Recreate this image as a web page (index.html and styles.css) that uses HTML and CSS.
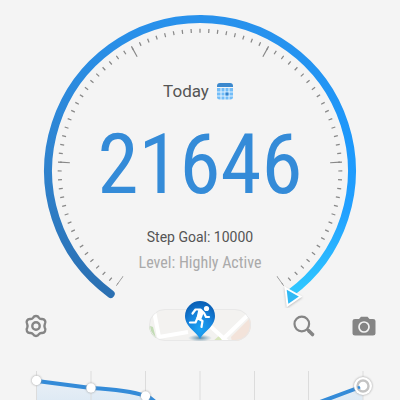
FILE: index.html
```html
<!DOCTYPE html>
<html lang="en">
<head>
<meta charset="utf-8">
<meta name="viewport" content="width=device-width, initial-scale=1">
<title>Steps</title>
<link rel="stylesheet" href="styles.css">
</head>
<body>
<main class="app">
  <section class="gauge">
    <svg class="dial" viewBox="0 0 400 308" aria-hidden="true">
      <defs>
        <linearGradient id="ringLeft" gradientUnits="userSpaceOnUse" x1="0" y1="294" x2="0" y2="18">
          <stop offset="0" stop-color="#2b70b2"/>
          <stop offset=".45" stop-color="#2f82cd"/>
          <stop offset="1" stop-color="#2891ec"/>
        </linearGradient>
        <linearGradient id="ringRight" gradientUnits="userSpaceOnUse" x1="0" y1="18" x2="0" y2="294">
          <stop offset="0" stop-color="#2891ec"/>
          <stop offset=".45" stop-color="#1d98fb"/>
          <stop offset=".7" stop-color="#21a0ff"/>
          <stop offset="1" stop-color="#2fc8ff"/>
        </linearGradient>
      </defs>
      <g fill="none" stroke-width="8">
        <path d="M289.300 293.900A152 152 0 0 0 200 19" stroke="url(#ringRight)"/>
        <path d="M110.700 293.900A152 152 0 0 1 200.500 19" stroke="url(#ringLeft)" stroke-linecap="round"/>
      </g>
      <g fill="none" stroke="#888">
        <path d="M117.500 284.500A140.300 140.300 0 1 1 282.500 284.500" pathLength="8000" stroke-width="4" stroke-dasharray="14 86" stroke-dashoffset="7"/>
        <path d="M120.400 280.500A135.400 135.400 0 1 1 279.600 280.500" pathLength="8000" stroke-width="10" stroke-dasharray="14 1586" stroke-dashoffset="7"/>
      </g>
      <path class="pointer" d="M285.500 288L300.500 296.500L287.500 305.500Z"/>
    </svg>
    <div class="readout">
      <button class="day" type="button">Today
        <svg width="16" height="17" viewBox="0 0 16 17" aria-hidden="true">
          <path d="M0 4V3Q0 0 3 0H13Q16 0 16 3V4Z" fill="#3b88cd"/>
          <path d="M0 5H16V14Q16 16.500 13 16.500H3Q0 16.500 0 14Z" fill="#72bdf8"/>
          <path d="M4 5V17M8 5V17M12 5V17M0 9H16M0 13H16" stroke="#e4f2fd"/>
          <path d="M8.500 9.500H11.500V12.500H8.500Z" fill="#3484cf"/>
        </svg>
      </button>
      <strong class="steps">21646</strong>
      <p class="goal">Step Goal: 10000</p>
      <p class="level">Level: Highly Active</p>
    </div>
  </section>

  <nav class="tools">
    <button class="tool" type="button" aria-label="Settings">
      <svg width="24" height="24" viewBox="0 0 24 24" fill="none" stroke="#858585" stroke-width="2.400">
        <path d="M9 3.800Q10 2 12 2Q14 2 15 3.800Q16 5.300 17.800 5Q20 4.900 21 6.700Q22 8.500 20.800 10.200Q20 12 20.800 13.800Q22 15.500 21 17.300Q20 19.100 17.800 19Q16 18.700 15 20.200Q14 22 12 22Q10 22 9 20.200Q8 18.700 6.200 19Q4 19.100 3 17.300Q2 15.500 3.200 13.800Q4 12 3.200 10.200Q2 8.500 3 6.700Q4 4.900 6.200 5Q8 5.300 9 3.800Z"/>
        <circle cx="12" cy="12" r="3.700"/>
      </svg>
    </button>
    <button type="button" aria-label="Map">
      <svg width="104" height="46" viewBox="0 0 104 46">
        <defs>
          <clipPath id="pill"><rect x="1" y="13" width="102" height="32" rx="16"/></clipPath>
          <radialGradient id="pin" cx=".5" cy=".75" r=".7">
            <stop offset="0" stop-color="#1ca4f4"/><stop offset=".6" stop-color="#1683dc"/><stop offset="1" stop-color="#0b62b8"/>
          </radialGradient>
          <radialGradient id="shade"><stop offset="0" stop-color="#356f91" stop-opacity=".8"/><stop offset="1" stop-color="#5089a8" stop-opacity="0"/></radialGradient>
        </defs>
        <g clip-path="url(#pill)">
          <path d="M0 13H104V46H0Z" fill="#f3f2f0"/>
          <path d="M0 29L5 31L9 46H0Z" fill="#c2dcb4"/>
          <path d="M64 46L72 39L78 46Z" fill="#d8e5bd"/>
          <path d="M83 41L104 20V46H84Z" fill="#f3e3da"/>
          <path d="M6 15L11 41L40 36M62 30L82 48M74 44L102 17" fill="none" stroke="#fff" stroke-width="4"/>
        </g>
        <rect x="1.500" y="13.500" width="101" height="31" rx="15.500" fill="none" stroke="#e8e8e8"/>
        <ellipse cx="52" cy="42" rx="12" ry="3.500" fill="url(#shade)"/>
        <path d="M52 43C49 36 37 31 37 20A15 15 0 0 1 67 20C67 31 55 36 52 43Z" fill="url(#pin)"/>
        <circle cx="58.500" cy="12.500" r="2.600" fill="#fff"/>
        <path d="M44.500 17.500L47.500 13.500H52.500L56 17L58 21H61M52.500 15.500L49.500 22L54.500 25L53.500 31M49.500 22L47.500 26.500H42" fill="none" stroke="#fff" stroke-width="2.200" stroke-linejoin="round" stroke-linecap="round"/>
        <path d="M50.500 13L56 16L53 24L48.500 22Z" fill="#fff"/>
      </svg>
    </button>
    <div class="tools-end">
      <button class="tool" type="button" aria-label="Search">
        <svg width="24" height="24" viewBox="0 0 24 24" fill="none" stroke="#858585">
          <circle cx="9.800" cy="10" r="7.300" stroke-width="2.200"/>
          <path d="M15 15L17 17" stroke-width="2.500"/>
          <path d="M17 17L20.500 20.500" stroke-width="3.600" stroke-linecap="round"/>
        </svg>
      </button>
      <button class="tool" type="button" aria-label="Camera">
        <svg width="24" height="24" viewBox="0 0 24 24">
          <path d="M7 5L9 2.800H15.500L17.500 5H21Q23.500 5 23.500 7V19.500Q23.500 21.500 21 21.500H3Q.5 21.500 .5 19.500V7Q.5 5 3 5Z" fill="#858585"/>
          <circle cx="12" cy="13" r="5" fill="#858585" stroke="#f4f4f4" stroke-width="1.700"/>
        </svg>
      </button>
    </div>
  </nav>

  <section class="chart" aria-label="Step history">
    <svg viewBox="0 0 400 30" aria-hidden="true">
      <defs>
        <linearGradient id="area" x1="0" y1="0" x2="0" y2="1"><stop offset="0" stop-color="#e8eff6"/><stop offset="1" stop-color="#dfeaf4"/></linearGradient>
      </defs>
      <path d="M37 11L91 18Q128 20 146 26L153 30H37ZM325 30L363 16V30Z" fill="url(#area)"/>
      <path d="M36.500 1V30M91 1V30M145.500 1V30M200 1V30M254.500 1V30M308.500 1V30M363 1V30" stroke="#dcdcdc"/>
      <path d="M37 11L91 18Q128 20 146 26Q151 27.500 156 33M320 32L363 16" fill="none" stroke="#348bd8" stroke-width="4"/>
      <g class="points">
        <circle cx="36.500" cy="10.500" r="4.700"/>
        <circle cx="91" cy="18" r="4.700"/>
        <circle cx="145.500" cy="26" r="4.700"/>
        <circle cx="363" cy="16" r="9"/>
      </g>
      <circle cx="363" cy="16" r="5.500" fill="#fff" stroke="#c4c4c4" stroke-width="2.400"/>
      <path d="M358 18L360 17" stroke="#348bd8" stroke-width="3"/>
    </svg>
  </section>
</main>
</body>
</html>
```
FILE: styles.css
```css
* {
  box-sizing: border-box;
}

body {
  margin: 0;
  background: #f4f4f4;
  color: #555;
  font-family: Roboto, "Liberation Sans", sans-serif;
}

.app {
  height: 100vh;
  overflow: hidden;
}

svg {
  display: block;
}

button {
  padding: 0;
  border: 0;
  background: none;
  color: inherit;
  font: inherit;
  cursor: pointer;
}

.gauge {
  display: grid;
}

.dial,
.readout {
  grid-area: 1 / 1;
}

.dial {
  width: 100%;
}

.pointer {
  fill: #31b9f5;
  stroke: #fff;
  stroke-width: 2;
  filter: drop-shadow(0 1px 1px #bbb);
}

.readout {
  display: flex;
  flex-direction: column;
  align-items: center;
  padding-top: 79px;
}

.day {
  display: flex;
  align-items: center;
  gap: 8px;
  margin-right: 4px;
  font-size: 17px;
  line-height: 24px;
}

.steps {
  margin-top: 14px;
  color: #348bd8;
  font-family: "Roboto Condensed", "Liberation Sans Narrow", Roboto, sans-serif;
  font-size: 83px;
  font-weight: 400;
  line-height: 96px;
}

.goal,
.level {
  margin: 0;
  line-height: 26px;
}

.goal {
  margin-top: 11px;
  font-size: 14px;
}

.level {
  color: #aaa;
  font-family: "Roboto Condensed", "Liberation Sans Narrow", Roboto, sans-serif;
  font-size: 16px;
}

.tools {
  display: grid;
  grid-template-columns: 1fr auto 1fr;
  align-items: end;
  justify-items: start;
  margin-top: -12px;
  padding: 0 24px;
}

.tool {
  margin-bottom: 4px;
}

.tools-end {
  display: flex;
  gap: 36px;
  justify-self: end;
}

.chart {
  margin-top: 28px;
}

.chart svg {
  width: 100%;
}

.points {
  fill: #fff;
  filter: drop-shadow(0 0 1px #999);
}
```
